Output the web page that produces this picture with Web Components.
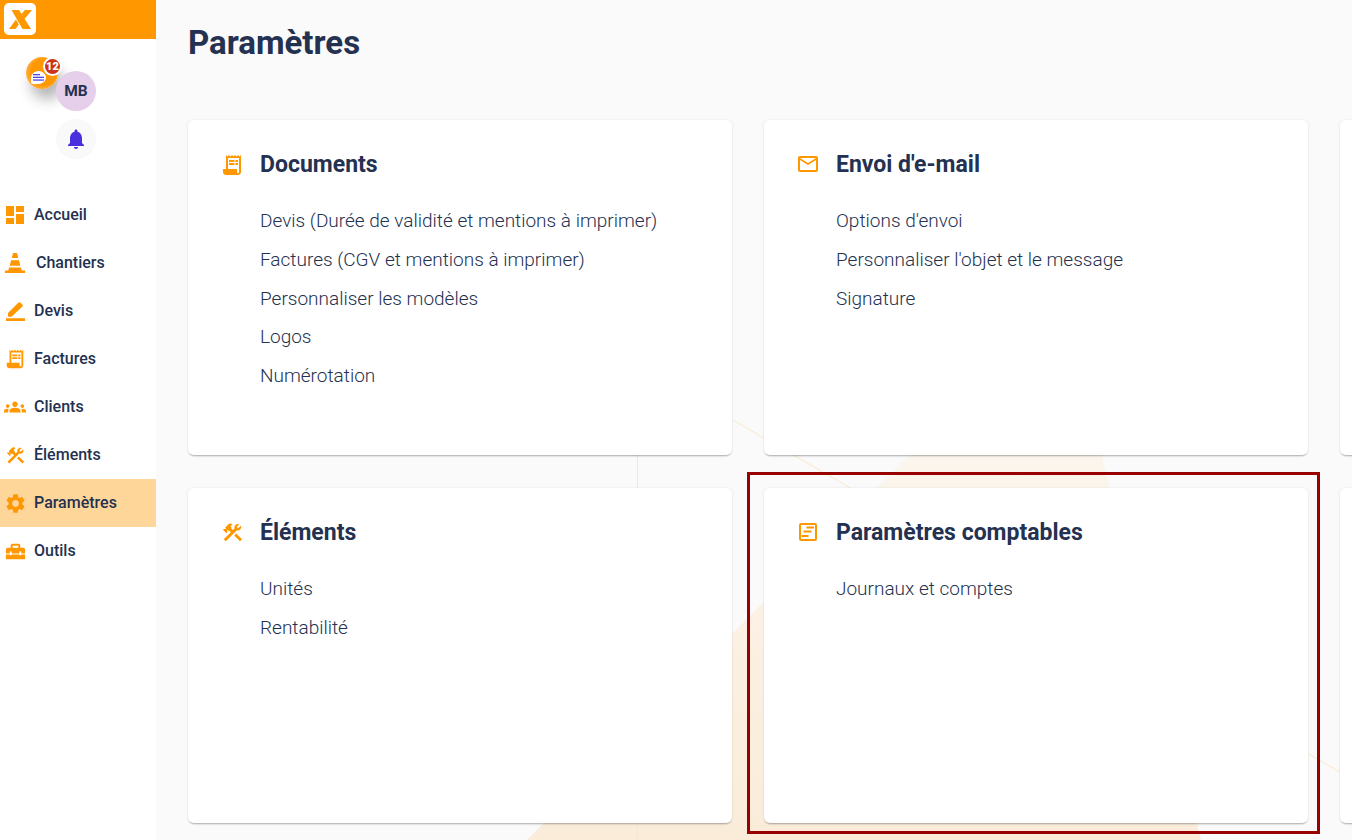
<!DOCTYPE html>
<html lang="fr">
<head>
<meta charset="utf-8">
<title>Paramètres</title>
<style>
  html, body { margin: 0; height: 100%; overflow: hidden; }
  body { font-family: Roboto, "Liberation Sans", sans-serif; color: #243150; background: #fafafa; }
  app-shell { height: 840px; }
</style>
</head>
<body>
<app-shell>
  <side-nav slot="nav">
    <nav-item icon="dashboard" size="24">Accueil</nav-item>
    <nav-item icon="cone" size="22" gap="6">Chantiers</nav-item>
    <nav-item icon="pencil" size="19">Devis</nav-item>
    <nav-item icon="receipt" size="22">Factures</nav-item>
    <nav-item icon="groups" size="22">Clients</nav-item>
    <nav-item icon="tools" size="21">Éléments</nav-item>
    <nav-item icon="gear" size="23" active>Paramètres</nav-item>
    <nav-item icon="toolbox" size="23">Outils</nav-item>
  </side-nav>
  <settings-page heading="Paramètres">
    <settings-card heading="Documents" icon="receipt">
      <a>Devis (Durée de validité et mentions à imprimer)</a>
      <a>Factures (CGV et mentions à imprimer)</a>
      <a>Personnaliser les modèles</a>
      <a>Logos</a>
      <a>Numérotation</a>
    </settings-card>
    <settings-card heading="Envoi d'e-mail" icon="mail" icon-up>
      <a>Options d'envoi</a>
      <a>Personnaliser l'objet et le message</a>
      <a>Signature</a>
    </settings-card>
    <settings-card></settings-card>
    <settings-card heading="Éléments" icon="tools" icon-size="23" icon-up>
      <a>Unités</a>
      <a>Rentabilité</a>
    </settings-card>
    <settings-card heading="Paramètres comptables" icon="ledger" icon-up highlight>
      <a>Journaux et comptes</a>
    </settings-card>
    <settings-card></settings-card>
  </settings-page>
</app-shell>

<script>
const ICONS = {
  dashboard: `<path d="M3 13h8V3H3v10zm0 8h8v-6H3v6zm10 0h8V11h-8v10zm0-18v6h8V3h-8z"/>`,
  cone: `<path d="M9.800 1h4.400l1.300 5.500H8.500z"/><path d="M7.700 9h8.600l1.500 6H6.200z"/><path d="M5.500 17h13l.9 3.200H23V23H1v-2.800h3.700z"/>`,
  pencil: `<path d="M2.500 18v-4.200L15.500 1a2 2 0 0 1 2.800 0l2.200 2.200a2 2 0 0 1 0 2.800L7 18.500H3a.5.5 0 0 1-.5-.5z"/><path d="M0 20.500h24V24H0z"/>`,
  receipt: `<path d="M19.500 3.500 18 2l-1.500 1.500L15 2l-1.500 1.500L12 2l-1.500 1.500L9 2 7.500 3.500 6 2v14H3v3c0 1.660 1.340 3 3 3h12c1.660 0 3-1.340 3-3V2l-1.500 1.500zM19 19c0 .550-.450 1-1 1s-1-.450-1-1v-3H8V5h11v14z"/><path d="M9 7h5.500v2H9zm6.500 0H18v2h-2.500zM9 10h5.500v2H9zm6.500 0H18v2h-2.500z"/>`,
  groups: `<path d="M12 12.750c1.630 0 3.070.390 4.240.900 1.080.480 1.760 1.560 1.760 2.730V18H6v-1.610c0-1.180.680-2.260 1.760-2.730 1.170-.520 2.610-.910 4.240-.910zM4 13c1.100 0 2-.900 2-2s-.900-2-2-2-2 .900-2 2 .900 2 2 2zm1.130 1.100c-.370-.060-.740-.100-1.130-.100-.990 0-1.930.210-2.780.580C.480 14.900 0 15.620 0 16.430V18h4.500v-1.610c0-.830.230-1.610.630-2.290zM20 13c1.100 0 2-.900 2-2s-.900-2-2-2-2 .900-2 2 .900 2 2 2zm4 3.430c0-.810-.480-1.530-1.220-1.850-.850-.370-1.790-.580-2.780-.580-.390 0-.760.040-1.130.100.400.680.630 1.460.630 2.290V18H24v-1.570zM12 6c1.660 0 3 1.340 3 3s-1.340 3-3 3-3-1.340-3-3 1.340-3 3-3z"/>`,
  tools: `<path d="M13.783 15.172l2.121-2.121 5.996 5.996-2.121 2.121zM17.500 10c1.930 0 3.500-1.570 3.500-3.500 0-.580-.160-1.120-.410-1.600l-2.700 2.700-1.490-1.490 2.700-2.700c-.480-.250-1.020-.410-1.600-.410C15.570 3 14 4.570 14 6.500c0 .410.080.800.210 1.160l-1.850 1.850-1.780-1.780.710-.710-1.410-1.410L12 3.490c-1.170-1.170-3.070-1.170-4.240 0L4.220 7.030l1.410 1.410H2.810l-.710.710 3.540 3.540.710-.710V9.150l1.410 1.410.710-.710 1.780 1.780-7.410 7.410 2.120 2.120L16.340 9.790c.360.130.750.210 1.160.210z"/>`,
  gear: `<path d="M19.140 12.940c.040-.300.060-.610.060-.940 0-.320-.020-.640-.070-.940l2.030-1.580c.180-.140.230-.410.120-.610l-1.920-3.320c-.120-.220-.370-.290-.590-.220l-2.390.960c-.500-.380-1.030-.700-1.620-.940l-.360-2.540c-.040-.240-.240-.410-.480-.410h-3.840c-.240 0-.430.170-.470.410l-.360 2.540c-.590.240-1.130.570-1.620.940l-2.390-.960c-.220-.080-.470 0-.590.220L2.740 8.870c-.120.210-.080.470.120.610l2.030 1.580c-.050.300-.090.630-.090.940s.020.640.070.940l-2.030 1.580c-.180.140-.230.410-.12.610l1.920 3.320c.120.220.370.290.590.220l2.390-.960c.500.380 1.030.700 1.620.940l.360 2.540c.050.240.240.410.480.410h3.840c.240 0 .440-.170.470-.410l.360-2.540c.590-.240 1.130-.560 1.620-.940l2.390.960c.220.080.470 0 .590-.220l1.920-3.320c.120-.220.070-.470-.120-.610l-2.010-1.580zM12 15.600c-1.980 0-3.600-1.620-3.600-3.600s1.620-3.600 3.600-3.600 3.600 1.620 3.600 3.600-1.620 3.600-3.600 3.600z"/>`,
  toolbox: `<path d="M18 16h-2v-1H8v1H6v-1H2v5h20v-5h-4zm2-8h-3V6c0-1.100-.900-2-2-2H9c-1.100 0-2 .900-2 2v2H4c-1.100 0-2 .900-2 2v4h4v-2h2v2h8v-2h2v2h4v-4c0-1.100-.900-2-2-2zm-5 0H9V6h6v2z"/>`,
  mail: `<path d="M22 6c0-1.100-.900-2-2-2H4c-1.100 0-2 .900-2 2v12c0 1.100.900 2 2 2h16c1.100 0 2-.900 2-2V6zm-2 0l-8 5-8-5h16zm0 12H4V8l8 5 8-5v10z"/>`,
  ledger: `<path fill-rule="evenodd" d="M5 3h14a2 2 0 0 1 2 2v14a2 2 0 0 1-2 2H5a2 2 0 0 1-2-2V5a2 2 0 0 1 2-2zm0 2v14h14V5H5z"/><path d="M10.500 6.500H18v2h-7.500zM7.500 10.500h8v2h-8zM5.500 15h7v2h-7z"/>`
};

class AppIcon extends HTMLElement {
  constructor() {
    super();
    this.attachShadow({ mode: "open" });
  }
  connectedCallback() {
    const size = this.getAttribute("size") || 24;
    this.shadowRoot.innerHTML = `
      <style>
        :host { display: inline-flex; flex: none; color: #ff9800; }
        svg { display: block; fill: currentColor; }
      </style>
      <svg width="${size}" height="${size}" viewBox="0 0 24 24">${ICONS[this.getAttribute("name")] || ""}</svg>`;
  }
}
customElements.define("app-icon", AppIcon);

const shellTemplate = document.createElement("template");
shellTemplate.innerHTML = `
  <style>
    :host { display: grid; grid-template-columns: 156px 1fr; overflow: hidden; }
  </style>
  <slot name="nav"></slot>
  <slot></slot>
`;
class AppShell extends HTMLElement {
  constructor() {
    super();
    this.attachShadow({ mode: "open" });
    this.shadowRoot.appendChild(shellTemplate.content.cloneNode(true));
  }
}
customElements.define("app-shell", AppShell);

const navTemplate = document.createElement("template");
navTemplate.innerHTML = `
  <style>
    :host { display: flex; flex-direction: column; background: #fff; height: 840px; position: relative; z-index: 1; }
    .brand { height: 39px; background: #ff9800; flex: none; padding: 3px 0 0 4px; box-sizing: border-box; }
    .logo { display: block; }
    .user { height: 152px; flex: none; position: relative; }
    .avatar, .bell {
      position: absolute; left: 56px; width: 40px; height: 40px; border-radius: 50%;
      display: flex; align-items: center; justify-content: center;
    }
    .avatar { top: 32px; background: #e5cfea; font-size: 15.500px; font-weight: 700; color: #243150; }
    .bell { top: 80px; background: #f9f9f9; }
    .bell svg { display: block; }
    .chat {
      position: absolute; left: 26px; top: 18px; width: 32px; height: 32px; border-radius: 50%;
      background: radial-gradient(circle at 55% 48%, #ff9800 0 52%, #ffab3d 70%, #ffdca8 88%, #fff3e0 100%);
      box-shadow: 5px 10px 14px rgba(0,0,0,.3);
    }
    .bubble {
      position: absolute; left: 5px; top: 14px; width: 15px; height: 13px;
      border-radius: 50% 50% 50% 15%;
      background: #fff; display: flex; align-items: center; justify-content: center;
    }
    .badge {
      position: absolute; left: 17px; top: 0; width: 15px; height: 15px; border-radius: 50%;
      background: #c9341a; border: 2px solid #fff;
      color: #fff; font-size: 11px; font-weight: 900; line-height: 15px; text-align: center;
    }
    .items { display: flex; flex-direction: column; }
  </style>
  <div class="brand">
    <svg class="logo" width="32" height="32" viewBox="0 0 32 32">
      <rect width="32" height="32" rx="5" fill="#fff"/>
      <path fill="#ff9800" d="M7.500 7H15l2 3 10 16h-8.500z"/>
      <path fill="#ff9800" d="M21 7h7l-7.500 9-3-5zM12 16.500l2.800 5-3.300 4.500H5z"/>
    </svg>
  </div>
  <div class="user">
    <div class="chat">
      <div class="bubble">
        <svg width="11" height="7" viewBox="0 0 11 7" fill="#4f46e5"><rect width="7" height="1.300"/><rect width="11" height="1.300" y="2.700"/><rect width="11" height="1.300" y="5.400"/></svg>
      </div>
      <div class="badge">12</div>
    </div>
    <div class="avatar">MB</div>
    <div class="bell">
      <svg width="24" height="24" viewBox="0 0 24 24" fill="#4a30dc"><path d="M12 22c1.100 0 2-.900 2-2h-4c0 1.100.890 2 2 2zm6-6v-5c0-3.070-1.640-5.640-4.500-6.320V4c0-.830-.670-1.500-1.500-1.500s-1.500.670-1.500 1.500v.680C7.630 5.360 6 7.920 6 11v5l-2 2v1h16v-1l-2-2z"/></svg>
    </div>
  </div>
  <div class="items"><slot></slot></div>
`;
class SideNav extends HTMLElement {
  constructor() {
    super();
    this.attachShadow({ mode: "open" });
    this.shadowRoot.appendChild(navTemplate.content.cloneNode(true));
  }
}
customElements.define("side-nav", SideNav);

class NavItem extends HTMLElement {
  constructor() {
    super();
    this.attachShadow({ mode: "open" });
  }
  connectedCallback() {
    const gap = this.getAttribute("gap") || 4;
    this.shadowRoot.innerHTML = `
      <style>
        :host {
          display: flex; align-items: center; height: 48px; box-sizing: border-box;
          font-size: 16px; font-weight: 500; color: #243150;
        }
        :host([active]) { background: #ffd699; }
        .cell { width: 30px; display: flex; justify-content: center; flex: none; }
        .label { margin-left: ${gap}px; margin-bottom: 2px; }
      </style>
      <span class="cell"><app-icon name="${this.getAttribute("icon")}" size="${this.getAttribute("size") || 24}"></app-icon></span>
      <span class="label"><slot></slot></span>`;
  }
}
customElements.define("nav-item", NavItem);

const pageTemplate = document.createElement("template");
pageTemplate.innerHTML = `
  <style>
    :host { display: block; position: relative; overflow: hidden; height: 840px; background: #fafafa; }
    .decor { position: absolute; left: -156px; top: 0; width: 1352px; height: 840px; }
    .content { position: relative; padding: 0 0 0 32px; }
    h1 { margin: 0; padding-top: 24px; height: 120px; box-sizing: border-box; font-size: 33px; line-height: 37px; font-weight: 700; color: #243150; }
    .grid { display: grid; grid-template-columns: repeat(3, 544px); grid-auto-rows: 335px; column-gap: 32px; row-gap: 33px; }
  </style>
  <svg class="decor" viewBox="0 0 1352 840">
    <defs>
      <linearGradient id="peach" x1="0" y1="430" x2="0" y2="840" gradientUnits="userSpaceOnUse">
        <stop offset="0" stop-color="#fbf6ee"/>
        <stop offset="1" stop-color="#faecd9"/>
      </linearGradient>
    </defs>
    <polygon points="527,840 935,430 1095,430 1201,840" fill="url(#peach)"/>
    <path d="M733 420 1340 772M637.500 440V840" stroke="#fbe6cc" fill="none"/>
  </svg>
  <div class="content">
    <h1></h1>
    <div class="grid"><slot></slot></div>
  </div>
`;
class SettingsPage extends HTMLElement {
  constructor() {
    super();
    this.attachShadow({ mode: "open" });
    this.shadowRoot.appendChild(pageTemplate.content.cloneNode(true));
  }
  connectedCallback() {
    this.shadowRoot.querySelector("h1").textContent = this.getAttribute("heading");
  }
}
customElements.define("settings-page", SettingsPage);

class SettingsCard extends HTMLElement {
  constructor() {
    super();
    this.attachShadow({ mode: "open" });
  }
  connectedCallback() {
    const heading = this.getAttribute("heading");
    const icon = this.getAttribute("icon");
    const iconSize = this.getAttribute("icon-size") || 24;
    this.shadowRoot.innerHTML = `
      <style>
        :host {
          display: block; position: relative; background: #fff; border-radius: 6px;
          box-shadow: 0 2px 2px -1px rgba(0,0,0,.3), 0 0 3px rgba(0,0,0,.08);
          padding: 31px 32px 0; box-sizing: border-box;
        }
        :host([highlight])::after {
          content: ""; position: absolute; left: -17px; top: -16px; right: -12px; bottom: -11px;
          border: 3px solid #990000; pointer-events: none;
        }
        :host([icon-up]) .ic { margin-bottom: 2px; }
        .head { display: flex; align-items: center; gap: 16px; height: 28px; }
        .ic { width: 24px; display: flex; justify-content: center; flex: none; }
        h2 { margin: 0; font-size: 23px; line-height: 28px; font-weight: 700; color: #243150; }
        .links { padding: 23px 0 0 40px; }
        ::slotted(a) {
          display: block; height: 38.800px; line-height: 38.800px;
          font-size: 19px; font-weight: 300; color: #243150;
        }
      </style>
      ${heading ? `<div class="head"><span class="ic"><app-icon name="${icon}" size="${iconSize}"></app-icon></span><h2>${heading}</h2></div>
      <div class="links"><slot></slot></div>` : ""}`;
  }
}
customElements.define("settings-card", SettingsCard);
</script>
</body>
</html>
